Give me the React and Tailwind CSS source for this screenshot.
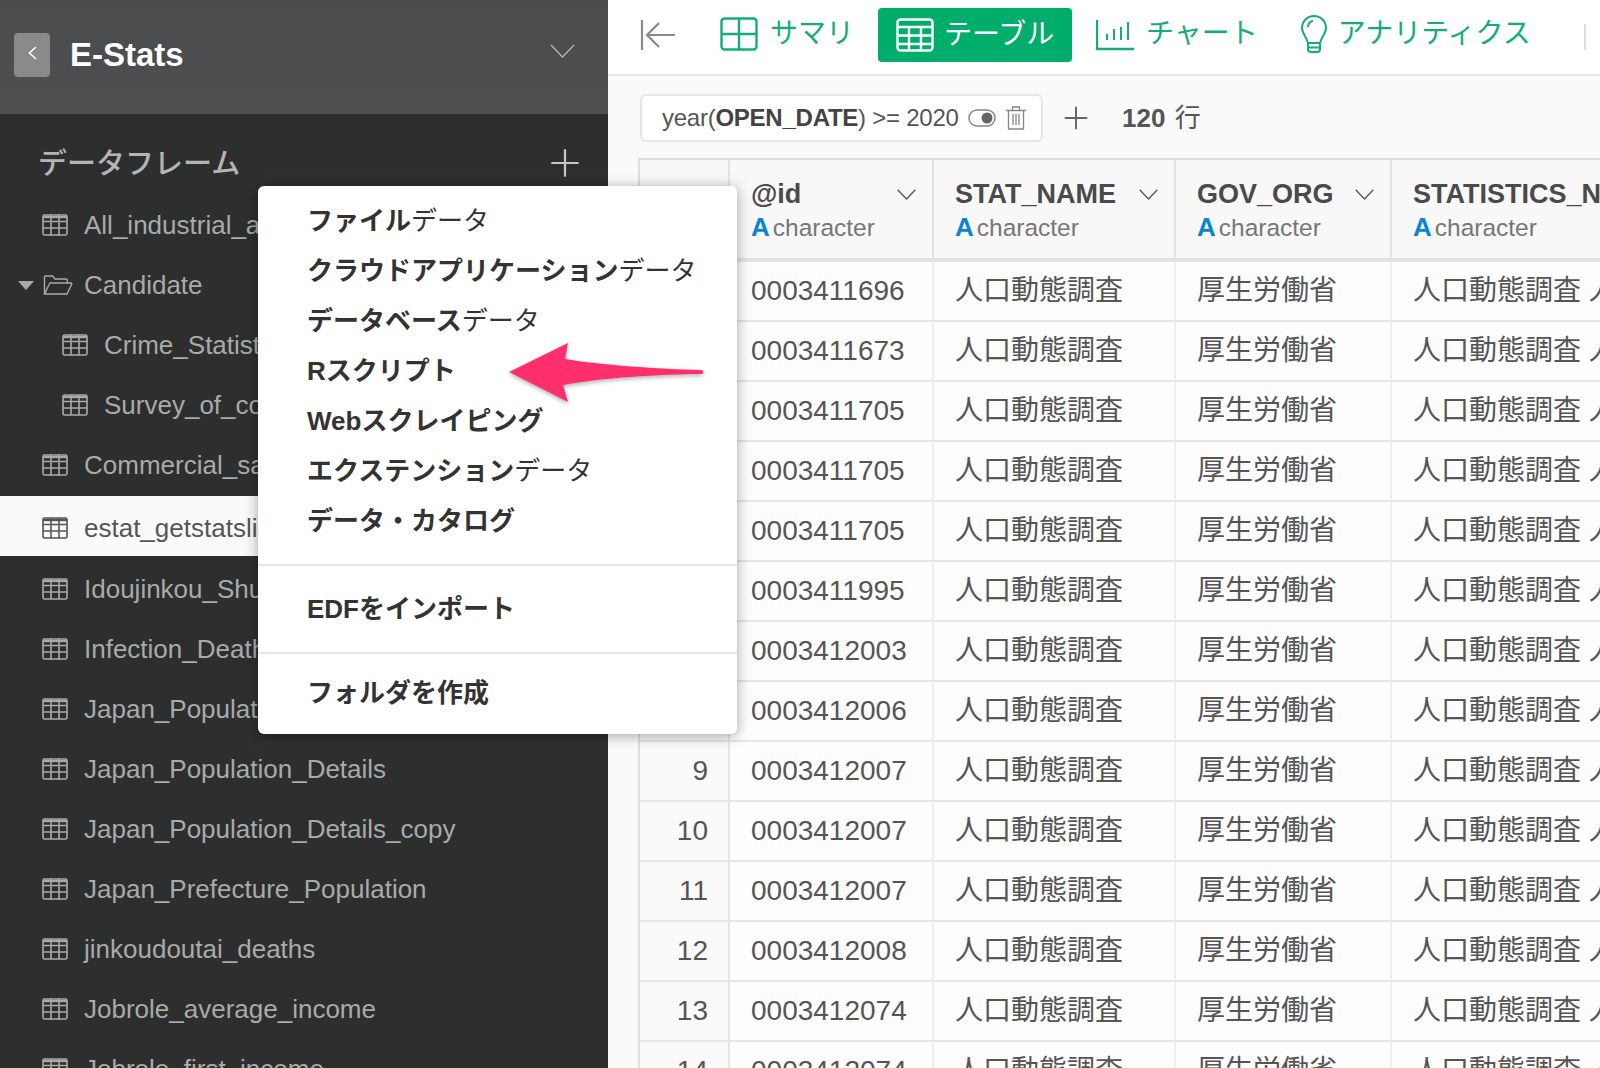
import { Plus } from "lucide-react";

const font = "font-['Liberation_Sans','Noto_Sans_CJK_JP',sans-serif]";

const frames = [
  { name: "All_industrial_average_income" },
  { name: "Candidate", folder: true },
  { name: "Crime_Statistics", nested: true },
  { name: "Survey_of_commerce", nested: true },
  { name: "Commercial_sales" },
  { name: "estat_getstatslist", active: true },
  { name: "Idoujinkou_Shukei" },
  { name: "Infection_Death" },
  { name: "Japan_Population" },
  { name: "Japan_Population_Details" },
  { name: "Japan_Population_Details_copy" },
  { name: "Japan_Prefecture_Population" },
  { name: "jinkoudoutai_deaths" },
  { name: "Jobrole_average_income" },
  { name: "Jobrole_first_income" },
];

const ids = [
  "0003411696", "0003411673", "0003411705", "0003411705", "0003411705",
  "0003411995", "0003412003", "0003412006", "0003412007", "0003412007",
  "0003412007", "0003412008", "0003412074", "0003412074",
];

const columns = [
  { name: "@id", width: "w-[204px]" },
  { name: "STAT_NAME", width: "w-[242px]" },
  { name: "GOV_ORG", width: "w-[216px]" },
  { name: "STATISTICS_NAME", width: "w-[300px]", noChevron: true },
];

function TableIcon({ className }) {
  return (
    <svg viewBox="0 0 26 22" className={className} fill="none" stroke="currentColor" strokeWidth="1.6">
      <rect x="1" y="1" width="24" height="20" rx="1.5" />
      <path d="M1 3h24" strokeWidth="2.4" />
      <path d="M1 7.500h24M1 14h24M9 1v20M17 1v20" />
    </svg>
  );
}

function FolderIcon() {
  return (
    <svg viewBox="0 0 30 20" className="w-[30px] h-[20px] shrink-0" fill="none" stroke="currentColor" strokeWidth="1.4">
      <path d="M1.500 19V2.200c0-.7.5-1.200 1.200-1.200h6.800l2.500 3h11c.8 0 1.300.5 1.300 1.300V8" />
      <path d="M1.500 19l5-10.300c.2-.4.5-.7 1-.7H28c.7 0 1 .6.700 1.200L24 19z" />
    </svg>
  );
}

function Sidebar() {
  return (
    <aside className="w-[608px] h-full shrink-0 bg-[#2d2e2e] overflow-hidden">
      <div className="h-[114px] bg-gradient-to-b from-[#4a4b4d] to-[#4e4f51] flex items-center pl-[14px] pr-[33px] pb-[4px]">
        <button className="w-[36px] h-[44px] rounded bg-[#8a8a8a] flex items-center justify-center">
          <svg viewBox="0 0 9 14" className="w-[9px] h-[14px] -mt-[4px]" fill="none" stroke="#fff" strokeWidth="1.500">
            <path d="M8 1L1.500 7L8 13" />
          </svg>
        </button>
        <div className="ml-[20px] text-[33px] font-bold text-white">E-Stats</div>
        <svg viewBox="0 0 25 14" className="w-[25px] h-[14px] ml-auto -mt-[8px]" fill="none" stroke="#b5b5b5" strokeWidth="1.300">
          <path d="M1 1l11.500 12L24 1" />
        </svg>
      </div>
      <div className="h-[81px] pl-[38px] pr-[21px] pt-[16px] flex items-center justify-between">
        <span className="text-[29px] font-medium text-[#b4b4b4] mt-[4px]">データフレーム</span>
        <Plus size={44} strokeWidth={1.2} className="text-[#c8c8c8]" />
      </div>
      <ul>
        {frames.map((f) => (
          <li
            key={f.name}
            className={
              "h-[60px] flex items-center text-[26px] whitespace-nowrap " +
              (f.active ? "bg-[#fafafa] text-[#555] mt-px mb-[3px] pt-[4px] " : "text-[#a9aaaa] ") +
              (f.nested ? "pl-[62px]" : f.folder ? "pl-[18px]" : "pl-[42px]")
            }
          >
            {f.folder ? (
              <>
                <span className="w-0 h-0 border-x-[8px] border-x-transparent border-t-[9px] border-t-[#a9aaaa] mr-[9px] shrink-0" />
                <FolderIcon />
                <span className="ml-[11px]">{f.name}</span>
              </>
            ) : (
              <>
                <TableIcon className="w-[26px] h-[22px] shrink-0" />
                <span className="ml-[16px]">{f.name}</span>
              </>
            )}
          </li>
        ))}
      </ul>
    </aside>
  );
}

function Toolbar() {
  const green = "text-[#14ad7a]";
  return (
    <div className="h-[76px] bg-white border-b-2 border-[#e8e8e8] flex items-start shrink-0 pl-[32px] text-[28px]">
      <svg viewBox="0 0 36 30" className="w-[36px] h-[30px] mt-[20px] text-[#8a8a8a]" fill="none" stroke="currentColor" strokeWidth="2.200">
        <path d="M2 0v30M35 15H8M19 3L7 15l12 12" />
      </svg>
      <div className={"flex items-center ml-[44px] mt-[17px] " + green}>
        <svg viewBox="0 0 38 34" className="w-[38px] h-[34px]" fill="none" stroke="currentColor" strokeWidth="2.400">
          <rect x="1.500" y="1.500" width="35" height="31" rx="3" />
          <path d="M19 1v32M1 17h36" />
        </svg>
        <span className="ml-[12px] leading-[34px]">サマリ</span>
      </div>
      <div className="flex items-center w-[194px] h-[54px] ml-[24px] mt-[8px] pl-[18px] rounded bg-[#00ad6b] text-white">
        <svg viewBox="0 0 38 34" className="w-[38px] h-[34px]" fill="none" stroke="currentColor" strokeWidth="2.400">
          <rect x="1.500" y="1.500" width="35" height="31" rx="3" />
          <path d="M1 9h36M1 17.500h36M1 26h36M13 8v25M25 8v25" />
        </svg>
        <span className="ml-[10px]">テーブル</span>
      </div>
      <div className={"flex items-center ml-[24px] mt-[17px] " + green}>
        <svg viewBox="0 0 38 34" className="w-[38px] h-[34px]" fill="none" stroke="currentColor" strokeWidth="2">
          <path d="M1 3v29h37" strokeWidth="2.400" />
          <path d="M11 23V17M18 23V12M25 23V10M32 23V5" />
        </svg>
        <span className="ml-[12px] leading-[34px]">チャート</span>
      </div>
      <div className={"flex items-center ml-[43px] mt-[15px] " + green}>
        <svg viewBox="0 0 26 38" className="w-[26px] h-[38px]" fill="none" stroke="currentColor" strokeWidth="2">
          <path d="M13 1C6.400 1 1 6.300 1 13c0 5.500 4.500 8.500 6 15h12c1.500-6.500 6-9.500 6-15C25 6.300 19.600 1 13 1z" />
          <path d="M7 28v6c0 2 1.500 3 3 3h6c1.500 0 3-1 3-3v-6M7 32.500h12" />
          <path d="M7 12c0-3 2-5.500 5-6" />
        </svg>
        <span className="ml-[11px] leading-[38px]">アナリティクス</span>
      </div>
      <div className="ml-auto mr-[14px] mt-[24px] w-[2px] h-[26px] bg-[#dcdcdc]" />
    </div>
  );
}

function FilterBar() {
  return (
    <div className="h-[82px] flex items-center pl-[32px] shrink-0">
      <div className="w-[403px] h-[48px] mt-[2px] bg-white border-2 border-[#e6e6e6] rounded-md flex items-center pl-[20px] text-[24px] tracking-[-0.25px] text-[#555] whitespace-nowrap">
        <span>
          year(<b className="text-[#444]">OPEN_DATE</b>) &gt;= 2020
        </span>
        <svg viewBox="0 0 28 18" className="w-[28px] h-[18px] ml-[9px] shrink-0" fill="none">
          <rect x="1" y="1" width="26" height="16" rx="8" stroke="#888" strokeWidth="1.500" />
          <circle cx="19" cy="9" r="5.500" fill="#666" />
        </svg>
        <svg viewBox="0 0 20 24" className="w-[20px] h-[24px] ml-[10px] shrink-0" fill="none" stroke="#888" strokeWidth="1.300">
          <path d="M0 4.500h20M6.500 4.500V1h7v3.500M2.500 4.500V23h15V4.500M7 8v11M10 8v11M13 8v11" />
        </svg>
      </div>
      <Plus size={36} strokeWidth={1.3} className="ml-[15px] mt-[2px] text-[#666]" />
      <div className="ml-[28px] mt-[2px] text-[26px] text-[#555]">
        <b>120</b> <span className="ml-[2px]">行</span>
      </div>
    </div>
  );
}

function DataTable() {
  return (
    <div className="ml-[30px] border-t-2 border-l-2 border-[#dedede] text-[28px] text-[#555] whitespace-nowrap w-max">
      <div className="flex h-[102px] bg-[#f8f8f8] border-b-4 border-[#e3e3e3]">
        <div className="w-[90px] border-r-2 border-[#e3e3e3]" />
        {columns.map((c) => (
          <div key={c.name} className={c.width + " border-r-2 border-[#e3e3e3] pl-[21px] pr-[16px] pt-[16px]"}>
            <div className="flex items-center justify-between h-[36px]">
              <b className="text-[27px] text-[#4a4a4a]">{c.name}</b>
              {!c.noChevron && (
                <svg viewBox="0 0 19 11" className="w-[19px] h-[11px] shrink-0" fill="none" stroke="#555" strokeWidth="1.300">
                  <path d="M.7 .7l8.800 9.300L18.300 .7" />
                </svg>
              )}
            </div>
            <div className="flex items-baseline -mt-[4px] text-[24.500px] text-[#777]">
              <b className="text-[#0a84d6] text-[26px] mr-[3px]">A</b>character
            </div>
          </div>
        ))}
      </div>
      {ids.map((id, i) => (
        <div key={i} className="flex h-[60px] bg-[#fdfdfd] border-b-2 border-[#e6e6e6]">
          <div className="w-[90px] border-r-2 border-[#e6e6e6] bg-[#fafafa] flex items-center justify-end pr-[20px]">{i + 1}</div>
          <div className="w-[204px] border-r-2 border-[#efefef] flex items-center pl-[21px]">{id}</div>
          <div className="w-[242px] border-r-2 border-[#efefef] flex items-center pl-[21px]">人口動態調査</div>
          <div className="w-[216px] border-r-2 border-[#efefef] flex items-center pl-[21px]">厚生労働省</div>
          <div className="w-[300px] flex items-center pl-[21px]">人口動態調査 人口動態統計</div>
        </div>
      ))}
    </div>
  );
}

function SourceMenu() {
  const sources = [
    ["ファイル", "データ"],
    ["クラウドアプリケーション", "データ"],
    ["データベース", "データ"],
    ["Rスクリプト", ""],
    ["Webスクレイピング", ""],
    ["エクステンション", "データ"],
    ["データ・カタログ", ""],
  ];
  return (
    <div className="absolute left-[258px] top-[186px] w-[479px] h-[548px] bg-white rounded-md shadow-[0_2px_14px_rgba(0,0,0,0.35)] text-[26px] text-[#333] whitespace-nowrap">
      <div className="h-[378px] pt-[10px] pl-[49px]">
        {sources.map(([strong, light]) => (
          <div key={strong} className="h-[50px] flex items-center">
            <b>{strong}</b>
            {light}
          </div>
        ))}
      </div>
      <div className="h-[88px] border-t-2 border-[#e6e6e6] flex items-center pl-[49px]">
        <b>EDFをインポート</b>
      </div>
      <div className="h-[82px] border-t-2 border-[#e6e6e6] flex items-center pl-[49px] pb-[2px]">
        <b>フォルダを作成</b>
      </div>
    </div>
  );
}

function Arrow() {
  return (
    <svg viewBox="0 0 1600 1068" className="absolute inset-0 w-[1600px] h-[1068px] pointer-events-none">
      <path
        d="M509 372L568 343L565 359C600 365 660 369 701 370C704 370 704 374 701 374C660 374 600 378 563 385L568 402Z"
        fill="#ff2f6e"
        className="drop-shadow-[0_2px_2px_rgba(0,0,0,0.3)]"
      />
    </svg>
  );
}

export default function App() {
  return (
    <div className={"relative w-[1600px] h-[1068px] overflow-hidden flex bg-[#fafafa] " + font}>
      <Sidebar />
      <main className="flex-1 min-w-0 flex flex-col overflow-hidden">
        <Toolbar />
        <FilterBar />
        <DataTable />
      </main>
      <SourceMenu />
      <Arrow />
    </div>
  );
}
